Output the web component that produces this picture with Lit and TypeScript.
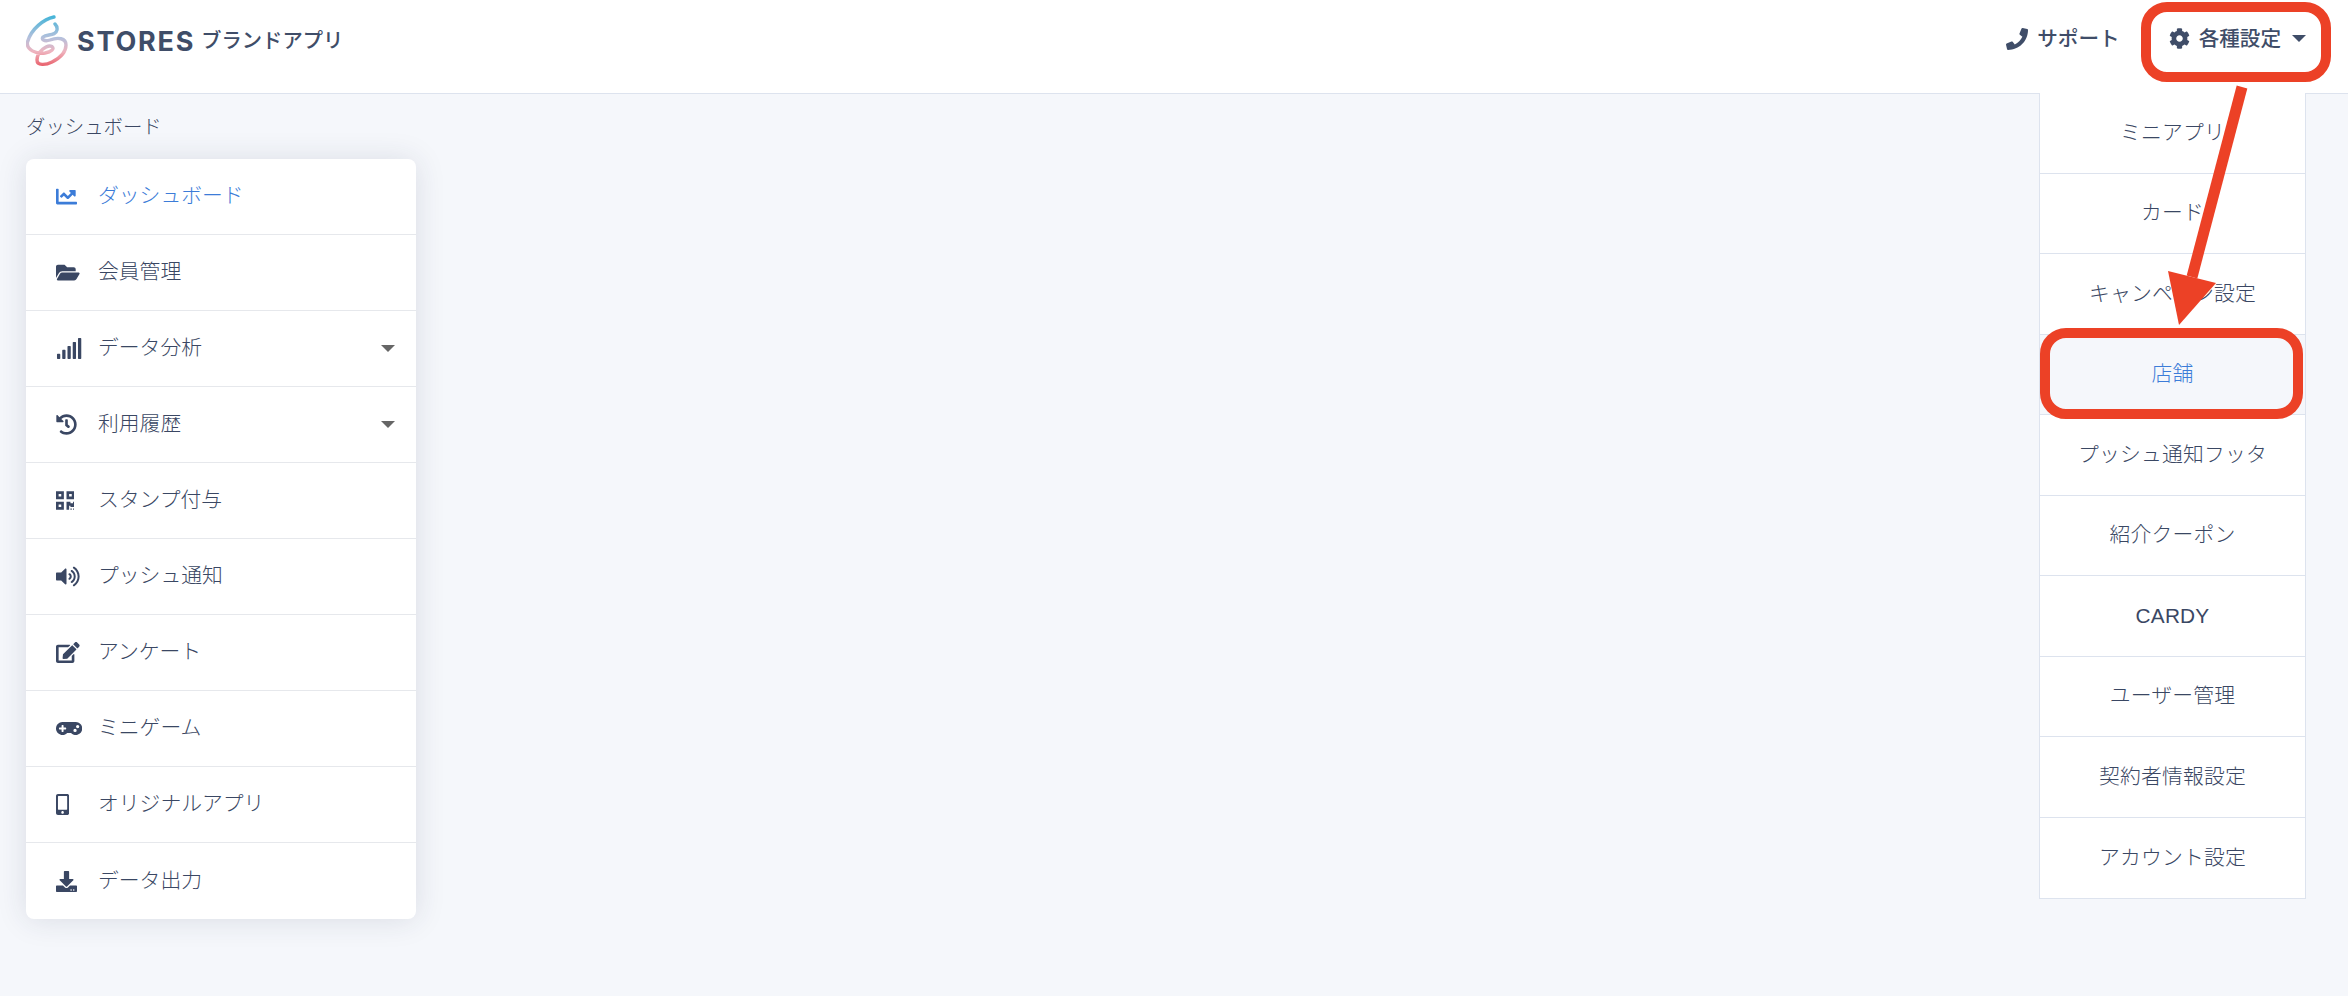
import { LitElement, html, css, svg } from "lit";
import { customElement } from "lit/decorators.js";

const ICONS: Record<string, [number, string]> = {
  chart: [512, "M496 384H64V80c0-8.84-7.16-16-16-16H16C7.16 64 0 71.16 0 80v336c0 17.67 14.33 32 32 32h464c8.84 0 16-7.16 16-16v-32c0-8.84-7.16-16-16-16zM464 96H345.94c-21.38 0-32.09 25.85-16.97 40.97l32.4 32.4L288 242.75l-73.37-73.37c-12.5-12.5-32.76-12.5-45.25 0l-68.69 68.69c-6.25 6.25-6.25 16.38 0 22.63l22.62 22.62c6.25 6.25 16.38 6.25 22.63 0L192 237.25l73.37 73.37c12.5 12.5 32.76 12.5 45.25 0l96-96 32.4 32.4c15.12 15.12 40.97 4.41 40.97-16.97V112c.01-8.84-7.15-16-16-16z"],
  folder: [576, "M572.694 292.093L500.27 416.248A63.997 63.997 0 0 1 444.989 448H45.025c-18.523 0-30.064-20.093-20.731-36.093l72.424-124.155A64 64 0 0 1 152 256h399.964c18.523 0 30.064 20.093 20.73 36.093zM152 224h328v-48c0-26.51-21.49-48-48-48H272l-64-64H48C21.49 64 0 85.49 0 112v278.046l69.077-118.418C86.214 242.25 117.989 224 152 224z"],
  signal: [640, "M216 288h-48c-8.84 0-16 7.16-16 16v192c0 8.84 7.16 16 16 16h48c8.84 0 16-7.16 16-16V304c0-8.84-7.16-16-16-16zM88 384H40c-8.84 0-16 7.16-16 16v96c0 8.84 7.16 16 16 16h48c8.84 0 16-7.16 16-16v-96c0-8.84-7.16-16-16-16zm256-192h-48c-8.84 0-16 7.16-16 16v288c0 8.84 7.16 16 16 16h48c8.84 0 16-7.16 16-16V208c0-8.84-7.16-16-16-16zm128-96h-48c-8.84 0-16 7.16-16 16v384c0 8.84 7.16 16 16 16h48c8.84 0 16-7.16 16-16V112c0-8.84-7.16-16-16-16zM600 0h-48c-8.84 0-16 7.16-16 16v480c0 8.84 7.16 16 16 16h48c8.84 0 16-7.16 16-16V16c0-8.84-7.16-16-16-16z"],
  history: [512, "M504 255.531c.253 136.64-111.18 248.372-247.82 248.468-59.015.042-113.223-20.53-155.822-54.911-11.077-8.94-11.905-25.541-1.839-35.607l11.267-11.267c8.609-8.609 22.353-9.551 31.891-1.984C173.062 425.135 212.781 440 256 440c101.705 0 184-82.311 184-184 0-101.705-82.311-184-184-184-48.814 0-93.149 18.969-126.068 49.932l50.754 50.754c10.08 10.08 2.941 27.314-11.313 27.314H24c-8.837 0-16-7.163-16-16V38.627c0-14.254 17.234-21.393 27.314-11.314l49.372 49.372C129.209 34.136 189.552 8 256 8c136.81 0 247.747 110.78 248 247.531zm-180.912 78.784l9.823-12.63c8.138-10.463 6.253-25.542-4.21-33.679L288 256.349V152c0-13.255-10.745-24-24-24h-16c-13.255 0-24 10.745-24 24v135.651l65.409 50.874c10.463 8.137 25.541 6.253 33.679-4.21z"],
  qr: [448, "M0 224h192V32H0v192zM64 96h64v64H64V96zm192-64v192h192V32H256zm128 128h-64V96h64v64zM0 480h192V288H0v192zm64-128h64v64H64v-64zm352-64h32v128h-96v-32h-32v96h-64V288h96v32h64v-32zm0 160h32v32h-32v-32zm-64 0h32v32h-32v-32z"],
  volume: [576, "M215.03 71.05L126.06 160H24c-13.26 0-24 10.74-24 24v144c0 13.25 10.74 24 24 24h102.06l88.97 88.95c15.03 15.03 40.97 4.47 40.97-16.97V88.02c0-21.46-25.96-32-40.97-16.97zm233.32-51.08c-11.17-7.33-26.18-4.24-33.51 6.95-7.34 11.17-4.22 26.18 6.95 33.51 66.27 43.49 105.82 116.6 105.82 195.58 0 78.98-39.55 152.09-105.82 195.58-11.17 7.32-14.29 22.34-6.95 33.5 7.04 10.71 21.93 14.56 33.51 6.95C528.27 439.58 576 351.33 576 256S528.27 72.43 448.35 19.97zM480 256c0-63.53-32.06-121.94-85.77-156.24-11.19-7.14-26.03-3.82-33.12 7.46s-3.78 26.21 7.41 33.36C408.27 165.97 432 209.11 432 256s-23.73 90.03-63.48 115.42c-11.19 7.14-14.5 22.07-7.41 33.36 6.51 10.36 21.12 15.14 33.12 7.46C447.94 377.94 480 319.54 480 256zm-141.77-76.87c-11.58-6.33-26.19-2.16-32.61 9.45-6.39 11.61-2.16 26.2 9.45 32.61C327.98 228.28 336 241.63 336 256c0 14.38-8.02 27.72-20.92 34.81-11.61 6.41-15.84 21-9.45 32.61 6.43 11.66 21.05 15.8 32.61 9.45 28.23-15.55 45.77-45 45.77-76.88s-17.54-61.32-45.78-76.86z"],
  edit: [576, "M402.6 83.2l90.2 90.2c3.8 3.8 3.8 10 0 13.8L274.4 405.6l-92.8 10.3c-12.4 1.4-22.9-9.1-21.5-21.5l10.3-92.8L388.8 83.2c3.8-3.8 10-3.8 13.8 0zm162-22.9l-48.8-48.8c-15.2-15.2-39.9-15.2-55.2 0l-35.4 35.4c-3.8 3.8-3.8 10 0 13.8l90.2 90.2c3.8 3.8 10 3.8 13.8 0l35.4-35.4c15.2-15.3 15.2-40 0-55.2zM384 346.2V448H64V128h229.8c3.2 0 6.2-1.3 8.5-3.5l40-40c7.6-7.6 2.2-20.5-8.5-20.5H48C21.5 64 0 85.5 0 112v352c0 26.5 21.5 48 48 48h352c26.5 0 48-21.5 48-48V306.2c0-10.7-12.9-16-20.5-8.5l-40 40c-2.2 2.3-3.5 5.3-3.5 8.5z"],
  game: [640, "M480.07 96H160a160 160 0 1 0 114.24 272h91.52A160 160 0 1 0 480.07 96zM248 268a12 12 0 0 1-12 12h-52v52a12 12 0 0 1-12 12h-24a12 12 0 0 1-12-12v-52H84a12 12 0 0 1-12-12v-24a12 12 0 0 1 12-12h52v-52a12 12 0 0 1 12-12h24a12 12 0 0 1 12 12v52h52a12 12 0 0 1 12 12zm216 76a40 40 0 1 1 40-40 40 40 0 0 1-40 40zm64-96a40 40 0 1 1 40-40 40 40 0 0 1-40 40z"],
  mobile: [320, "M272 0H48C21.5 0 0 21.5 0 48v416c0 26.5 21.5 48 48 48h224c26.5 0 48-21.5 48-48V48c0-26.5-21.5-48-48-48zM160 480c-17.7 0-32-14.3-32-32s14.3-32 32-32 32 14.3 32 32-14.3 32-32 32zm112-108c0 6.6-5.4 12-12 12H60c-6.6 0-12-5.4-12-12V60c0-6.6 5.4-12 12-12h200c6.6 0 12 5.4 12 12v312z"],
  download: [512, "M216 0h80c13.3 0 24 10.7 24 24v168h87.7c17.8 0 26.7 21.5 14.1 34.1L269.7 378.3c-7.5 7.5-19.8 7.5-27.3 0L90.1 226.1c-12.6-12.6-3.7-34.1 14.1-34.1H192V24c0-13.3 10.7-24 24-24zm296 376v112c0 13.3-10.7 24-24 24H24c-13.3 0-24-10.7-24-24V376c0-13.3 10.7-24 24-24h146.7l49 49c20.1 20.1 52.5 20.1 72.6 0l49-49H488c13.3 0 24 10.7 24 24zm-124 88c0-11-9-20-20-20s-20 9-20 20 9 20 20 20 20-9 20-20zm64 0c0-11-9-20-20-20s-20 9-20 20 9 20 20 20 20-9 20-20z"],
  phone: [512, "M493.4 24.6l-104-24c-11.3-2.6-22.9 3.3-27.5 13.9l-48 112c-4.2 9.8-1.4 21.3 6.9 28l60.6 49.6c-36 76.7-98.9 140.5-177.2 177.2l-49.6-60.6c-6.8-8.3-18.2-11.1-28-6.9l-112 48C3.9 366.5-2 378.1.6 389.4l24 104C27.1 504.2 36.7 512 48 512c256.1 0 464-207.5 464-464 0-11.2-7.7-20.9-18.6-23.4z"],
  cog: [512, "M487.4 315.7l-42.6-24.6c4.3-23.2 4.3-47 0-70.2l42.6-24.6c4.9-2.8 7.1-8.6 5.5-14-11.1-35.6-30-67.8-54.7-94.6-3.8-4.1-10-5.1-14.8-2.3L380.8 110c-17.9-15.4-38.5-27.3-60.8-35.1V25.8c0-5.6-3.9-10.5-9.4-11.7-36.7-8.2-74.3-7.8-109.2 0-5.5 1.2-9.4 6.1-9.4 11.7V75c-22.2 7.9-42.8 19.8-60.8 35.1L88.7 85.5c-4.9-2.8-11-1.9-14.8 2.3-24.7 26.7-43.6 58.9-54.7 94.6-1.7 5.4.6 11.2 5.5 14L67.3 221c-4.3 23.2-4.3 47 0 70.2l-42.6 24.6c-4.9 2.8-7.1 8.6-5.5 14 11.1 35.6 30 67.8 54.7 94.6 3.8 4.1 10 5.1 14.8 2.3l42.6-24.6c17.9 15.4 38.5 27.3 60.8 35.1v49.2c0 5.6 3.9 10.5 9.4 11.7 36.7 8.2 74.3 7.8 109.2 0 5.5-1.2 9.4-6.1 9.4-11.7v-49.2c22.2-7.9 42.8-19.8 60.8-35.1l42.6 24.6c4.9 2.8 11 1.9 14.8-2.3 24.7-26.7 43.6-58.9 54.7-94.6 1.5-5.5-.7-11.3-5.6-14.1zM256 336c-44.1 0-80-35.9-80-80s35.9-80 80-80 80 35.9 80 80-35.9 80-80 80z"],
};

const icon = (name: string) => {
  const [w, d] = ICONS[name];
  return html`<svg class="ico" viewBox="0 0 ${w} 512" fill="currentColor">${svg`<path d=${d}></path>`}</svg>`;
};

const NAV: { icon: string; label: string; caret?: boolean; active?: boolean }[] = [
  { icon: "chart", label: "ダッシュボード", active: true },
  { icon: "folder", label: "会員管理" },
  { icon: "signal", label: "データ分析", caret: true },
  { icon: "history", label: "利用履歴", caret: true },
  { icon: "qr", label: "スタンプ付与" },
  { icon: "volume", label: "プッシュ通知" },
  { icon: "edit", label: "アンケート" },
  { icon: "game", label: "ミニゲーム" },
  { icon: "mobile", label: "オリジナルアプリ" },
  { icon: "download", label: "データ出力" },
];

const MENU = ["ミニアプリ", "カード", "キャンペーン設定", "店舗", "プッシュ通知フッタ", "紹介クーポン", "CARDY", "ユーザー管理", "契約者情報設定", "アカウント設定"];

@customElement("app-root")
export class AppRoot extends LitElement {
  static styles = css`
    :host {
      display: block;
      position: relative;
      min-height: 996px;
      background: #f5f7fb;
      color: #3a4763;
      font-family: "Liberation Sans", "Noto Sans CJK JP", sans-serif;
      font-size: 20.8px;
      font-weight: 300;
      line-height: 30px;
      overflow: hidden;
    }
    .ico { display: block; height: 100%; }
    header {
      position: relative;
      height: 94px;
      box-sizing: border-box;
      background: #fff;
      border-bottom: 1px solid #dde3ee;
      display: flex;
      align-items: center;
      padding: 0 42px 13px 26px;
    }
    .logo { display: flex; align-items: center; flex: 1; }
    .mark { width: 44px; height: 54px; margin-top: 2px; margin-right: 7px; flex: none; }
    .brand { font-family: Inter, Lato, sans-serif; font-weight: 700; font-size: 27px; letter-spacing: 1.8px; color: #3f4d68; margin-top: 3px; }
    .app { font-weight: 500; font-size: 20.3px; margin-left: 6px; margin-top: 1px; color: #3f4d68; }
    .top { display: flex; align-items: center; font-weight: 500; font-size: 20.6px; color: #3f4d68; margin-top: -3px; }
    .top .ti { height: 22px; margin-right: 9px; }
    .support { margin-right: 49px; }
    .settings .ti { height: 21px; }
    .top .caret { margin-left: 11px; border-top-color: #3f4d68; }
    .caret { width: 0; height: 0; border-left: 7px solid transparent; border-right: 7px solid transparent; border-top: 7px solid #666; flex: none; }
    main { padding: 0 26px; }
    .crumb { font-size: 19.4px; height: 65px; display: flex; align-items: center; box-sizing: border-box; }
    .card {
      width: 390px;
      background: #fff;
      border-radius: 8px;
      box-shadow: 0 1px 30px rgba(40, 50, 80, 0.13);
      overflow: hidden;
    }
    .row {
      height: 76px;
      box-sizing: border-box;
      display: flex;
      align-items: center;
      padding: 0 21px 0 30px;
      border-bottom: 1px solid #e6e8ec;
    }
    .row:last-child { border-bottom: 0; }
    .row.active { color: #3c7cd8; }
    .slot { width: 43px; height: 21px; flex: none; }
    .label { flex: 1; margin-left: -1px; margin-top: -1px; }
    .menu {
      position: absolute;
      top: 93px;
      left: 2039px;
      width: 267px;
      box-sizing: border-box;
      background: #fff;
      border: 1px solid #dde3ee;
      border-top: 0;
    }
    .mi {
      height: 80.5px;
      box-sizing: border-box;
      display: flex;
      align-items: center;
      justify-content: center;
      border-bottom: 1px solid #dde3ee;
      letter-spacing: 0.2px;
    }
    .mi:last-child { border-bottom: 0; }
    .mi.on { background: #f5f7fb; color: #3c7cd8; }
    .overlay { position: absolute; inset: 0; width: 2348px; height: 996px; pointer-events: none; }
  `;

  render() {
    return html`
      <header>
        <div class="logo">
          <svg class="mark" viewBox="26 14 44 54" fill="none">
            <defs>
              <linearGradient id="lg" gradientUnits="userSpaceOnUse" x1="45" y1="15" x2="45" y2="66">
                <stop offset="0" stop-color="#3fb4d8"></stop>
                <stop offset=".45" stop-color="#b5c0dc"></stop>
                <stop offset=".72" stop-color="#efb4bf"></stop>
                <stop offset="1" stop-color="#e9606b"></stop>
              </linearGradient>
            </defs>
            <path d="M54 17 C44 19 31 29 27.5 42 C26 50 36 54 45 53 C51 52 55 49 52 46.5 C47 44 37 52 37 60 C37 66 46 65 52 62 C60 58 66 52 66 45 C66 38 58 37 50 40 C44 42 41 39 43 37 C47 34 56 36 57 30 C57.5 27 56 25 55 24" stroke="url(#lg)" stroke-width="3.4" stroke-linecap="round" stroke-linejoin="round"></path>
          </svg>
          <span class="brand">STORES</span>
          <span class="app">ブランドアプリ</span>
        </div>
        <div class="top support"><span class="ti">${icon("phone")}</span>サポート</div>
        <div class="top settings"><span class="ti">${icon("cog")}</span>各種設定<span class="caret"></span></div>
      </header>
      <main>
        <div class="crumb">ダッシュボード</div>
        <nav class="card">
          ${NAV.map(
            (n) => html`<div class="row ${n.active ? "active" : ""}">
              <span class="slot">${icon(n.icon)}</span>
              <span class="label">${n.label}</span>
              ${n.caret ? html`<span class="caret"></span>` : ""}
            </div>`
          )}
        </nav>
      </main>
      <div class="menu">
        ${MENU.map((m) => html`<div class="mi ${m === "店舗" ? "on" : ""}">${m}</div>`)}
      </div>
      <svg class="overlay" viewBox="0 0 2348 996" fill="none">
        <rect x="2146" y="7" width="180" height="70" rx="21" stroke="#ec4126" stroke-width="10"></rect>
        <rect x="2045" y="333" width="253" height="81" rx="21" stroke="#ec4126" stroke-width="10"></rect>
        <line x1="2242" y1="87" x2="2192" y2="277" stroke="#ec4126" stroke-width="11"></line>
        <polygon points="2168,271 2216,283 2179,325" fill="#ec4126"></polygon>
      </svg>
    `;
  }
}
